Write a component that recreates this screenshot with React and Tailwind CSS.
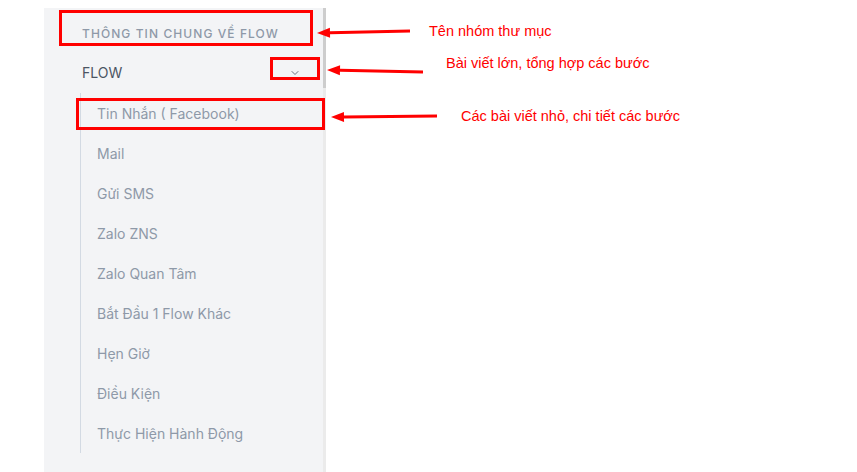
import React from 'react'

const items = [
  'Tin Nhắn ( Facebook)',
  'Mail',
  'Gửi SMS',
  'Zalo ZNS',
  'Zalo Quan Tâm',
  'Bắt Đầu 1 Flow Khác',
  'Hẹn Giờ',
  'Điều Kiện',
  'Thực Hiện Hành Động',
]

const notes = [
  { text: 'Tên nhóm thư mục', x: 429, y: 31, from: [410, 31], to: [317, 33] },
  { text: 'Bài viết lớn, tổng hợp các bước', x: 446, y: 63, from: [423, 72], to: [327, 70] },
  { text: 'Các bài viết nhỏ, chi tiết các bước', x: 461, y: 116, from: [437, 116], to: [331, 117] },
]

const Arrow = ({ from, to }) => {
  const [x1, y1] = from
  const [x2, y2] = to
  const a = Math.atan2(y2 - y1, x2 - x1)
  const len = 13
  const w = 5
  const bx = x2 - len * Math.cos(a)
  const by = y2 - len * Math.sin(a)
  const px = -Math.sin(a) * w
  const py = Math.cos(a) * w
  return (
    <g>
      <line x1={x1} y1={y1} x2={bx} y2={by} stroke="#ff0000" strokeWidth="3" />
      <polygon points={`${x2},${y2} ${bx + px},${by + py} ${bx - px},${by - py}`} fill="#ff0000" />
    </g>
  )
}

const Sidebar = () => {
  return (
    <div className="ml-[44px] mt-[8px] flex h-[464px] w-[282px] bg-[#f3f4f6]">
      <div className="flex-1 pl-[36px] pr-[8px] pt-[18px]">
        <div className="ml-[2px] text-[12px] leading-[16px] font-medium tracking-[0.09em] text-[#8e99a8] uppercase">
          Thông tin chung về flow
        </div>
        <div className="mt-[19px] ml-[2px] flex h-[24px] items-center justify-between">
          <span className="text-[14px] leading-[24px] text-[#4b5563]">FLOW</span>
          <svg className="mr-[14px]" width="12" height="12" viewBox="0 0 24 24" fill="none" stroke="#6b7280" strokeWidth="2" strokeLinecap="round" strokeLinejoin="round">
            <path d="m6 9 6 6 6-6" />
          </svg>
        </div>
        <ul className="mt-[8px] border-l border-[#d3dae3]">
          {items.map((item, i) => (
            <li key={i} className="flex h-[40px] items-center pl-[16px] text-[14px] text-[#8e99a8]">
              {item}
            </li>
          ))}
        </ul>
      </div>
      <div className="w-[3px] bg-[#ebebeb]">
        <div className="h-[80px] bg-[#cdcdcd]"></div>
      </div>
    </div>
  )
}

export default function App() {
  return (
    <div className="relative h-[472px] w-[857px] overflow-hidden bg-white" style={{ fontFamily: 'Inter, "Noto Sans", sans-serif' }}>
      <Sidebar />

      {/* annotation boxes */}
      <div className="absolute left-[59px] top-[10px] h-[36px] w-[254px] border-[3px] border-[#ff0000]"></div>
      <div className="absolute left-[270px] top-[57px] h-[23px] w-[50px] border-[3px] border-[#ff0000]"></div>
      <div className="absolute left-[76px] top-[98px] h-[32px] w-[249px] border-[3px] border-[#ff0000]"></div>

      <svg className="absolute left-0 top-0" width="857" height="472">
        {notes.map((n, i) => (
          <Arrow key={i} from={n.from} to={n.to} />
        ))}
      </svg>

      {notes.map((n, i) => (
        <div
          key={i}
          className="absolute whitespace-nowrap text-[14.5px] leading-[18px] text-[#ff0000]"
          style={{ left: n.x, top: n.y - 9, fontFamily: '"Liberation Sans", Arial, sans-serif' }}
        >
          {n.text}
        </div>
      ))}
    </div>
  )
}
